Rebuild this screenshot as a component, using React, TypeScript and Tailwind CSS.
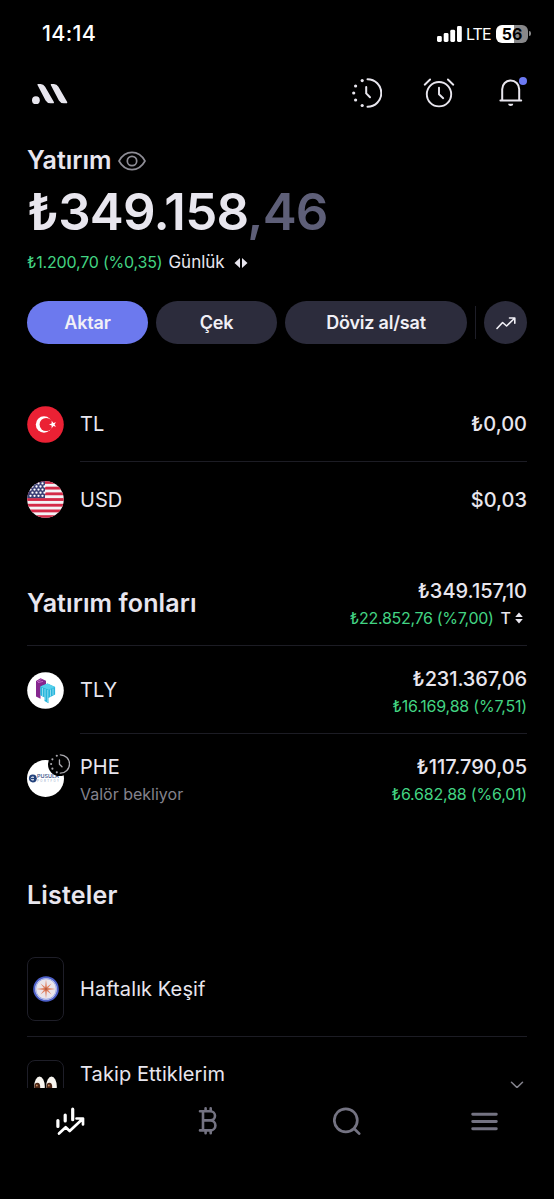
import type { ReactNode } from 'react';

const stars = [0, 1, 2, 3, 4].flatMap((row) => [0, 1, 2, 3].map((col) => [3.5 + col * 4 + (row % 2) * 2, 2.4 + row * 3.1]));

function DottedClock({ className }: { className: string }) {
    return (
        <svg viewBox="0 0 30 30" fill="none" stroke="currentColor" strokeLinecap="round" strokeLinejoin="round" className={className}>
            <path d="M15.5 1.2a13.8 13.8 0 0 1 0 27.6" strokeWidth="2" />
            <path d="M14.2 9v6.4l3.8 3.8" strokeWidth="2" />
            <g fill="currentColor" stroke="none">
                <circle cx="10.2" cy="2.6" r="1.6" />
                <circle cx="3.6" cy="8" r="1.6" />
                <circle cx="1.7" cy="15" r="1.6" />
                <circle cx="3.6" cy="22" r="1.6" />
                <circle cx="10.2" cy="27.5" r="1.6" />
            </g>
        </svg>
    );
}

function StatusBar() {
    return (
        <div className="flex h-[67px] items-center justify-between pl-[42px] pr-[23px] text-white">
            <span className="text-[21.5px] font-medium tracking-[0.3px]">14:14</span>
            <div className="flex items-center">
                <svg viewBox="0 0 25 16" className="h-4 w-[25px]" fill="white">
                    <rect x="0" y="10" width="4.8" height="6" rx="1.4" />
                    <rect x="6.7" y="7" width="4.8" height="9" rx="1.4" />
                    <rect x="13.3" y="3.8" width="4.8" height="12.2" rx="1.4" />
                    <rect x="20" y="0" width="4.8" height="16" rx="1.4" />
                </svg>
                <span className="ml-[4px] w-[26px] text-[16px] leading-[18px] tracking-[-0.9px]">LTE</span>
                <div className="ml-1 flex h-[18px] w-8 items-center justify-center rounded-md bg-linear-to-r from-white from-56% to-[#88888a] to-56% text-[16px] font-bold text-black">
                    56
                </div>
                <div className="ml-[1px] h-[5px] w-[2px] rounded-r-full bg-[#88888a]" />
            </div>
        </div>
    );
}

function Header() {
    return (
        <header className="flex h-[52px] items-center justify-between pl-8 pr-[31px] text-[#e8e6ee]">
            <svg viewBox="0 0 36 22" className="mt-[2px] h-[22px] w-9" fill="currentColor">
                <circle cx="3.9" cy="17.2" r="3.9" />
                <path d="M6.2 1.7h2.300c1.900 0 2.900.7 3.900 2.500l8.800 15.300h-2.600c-2.100 0-3.300-.6-4.300-2.400z" stroke="currentColor" strokeWidth="1.600" strokeLinejoin="round" />
                <path d="M19.500 1.700h2.300c1.900 0 2.900.7 3.900 2.500l8.800 15.300h-2.600c-2.100 0-3.300-.6-4.300-2.400z" stroke="currentColor" strokeWidth="1.600" strokeLinejoin="round" />
            </svg>
            <div className="flex items-center">
                <DottedClock className="size-[30px]" />
                <svg viewBox="0 0 32 30" className="ml-[41px] h-[30px] w-8" fill="none" stroke="currentColor" strokeWidth="1.9" strokeLinecap="round" strokeLinejoin="round">
                    <circle cx="16" cy="16.2" r="12.2" />
                    <path d="M16 9.6v6.6l4.2 4M1.7 6.700l5.400-5.200M30.300 6.700l-5.400-5.200" />
                </svg>
                <div className="relative ml-[44px]">
                    <svg viewBox="0 0 24 30" className="h-[30px] w-6" fill="none" stroke="currentColor" strokeWidth="2" strokeLinecap="round" strokeLinejoin="round">
                        <path d="M3.2 22.400V11.200a8.500 8.800 0 0 1 17 0v11.200M1.400 22.600h20.800" />
                        <path d="M9.200 25.800h5c0 1.400-1 2.200-2.500 2.200s-2.500-.8-2.500-2.200z" fill="currentColor" stroke="none" />
                    </svg>
                    <span className="absolute -top-[1px] left-[20px] size-2 rounded-full bg-[#6c79f3]" />
                </div>
            </div>
        </header>
    );
}

function TurkishFlag() {
    return (
        <svg viewBox="0 0 37 37" className="size-[37px]">
            <circle cx="18.5" cy="18.5" r="18.3" fill="#eb2134" />
            <circle cx="17" cy="18.5" r="8.2" fill="white" />
            <circle cx="19.2" cy="18.5" r="6.6" fill="#eb2134" />
            <path d="M22 18.500l2.600-.9.1-2.800 1.700 2.200 2.600-.8-1.500 2.300 1.500 2.300-2.600-.8-1.700 2.200-.1-2.800z" fill="white" />
        </svg>
    );
}

function UsFlag() {
    return (
        <svg viewBox="0 0 37 37" className="size-[37px]">
            <clipPath id="usd">
                <circle cx="18.5" cy="18.5" r="18.3" />
            </clipPath>
            <g clipPath="url(#usd)">
                <rect width="37" height="37" fill="#f4f3f6" />
                {[0, 1, 2, 3, 4, 5, 6].map((i) => (
                    <rect key={i} y={i * 5.7} width="37" height="2.85" fill="#d42a48" />
                ))}
                <rect width="18" height="17.1" fill="#3b3f75" />
                {stars.map(([x, y]) => (
                    <circle key={`${x}-${y}`} cx={x} cy={y} r="1.15" fill="white" />
                ))}
            </g>
        </svg>
    );
}

function TlyLogo() {
    return (
        <svg viewBox="0 0 37 37" className="size-[37px]">
            <circle cx="18.5" cy="18.5" r="18.3" fill="white" />
            <path d="M9 9l4.500-2.800 5.500 2.600v3.800l-5.500 3v11.200L9 24.500z" fill="#86278f" />
            <path d="M10 9.700l4.500-2.300M11 10.600l5-1.200" stroke="#c76bcb" strokeWidth=".9" />
            <path d="M13.300 14.600l7.200-3 7.600 3.300v7.600l-6.600 3.500v5.200l-4-2.200v-3.500l-4.200-2.200z" fill="#27b5dc" />
            <path d="M13.300 14.600l7.200-3 7.600 3.300-6.500 2.800z" fill="#56d0eb" />
            <path d="M15.500 16v8M18 17v11M20.800 18v12M23.500 17.500v7M26 16.500v6.500" stroke="#b8ebf6" strokeWidth=".7" />
        </svg>
    );
}

function PheLogo() {
    return (
        <div className="relative size-[37px] rounded-full bg-white">
            <svg viewBox="0 0 37 37" className="size-[37px]">
                <circle cx="5.800" cy="18.500" r="3" fill="white" stroke="#23427c" strokeWidth="1.800" />
                <path d="M4 17.700h3v-1.600l2.900 2.400L7 20.900v-1.600H4z" fill="#23427c" />
                <text x="10" y="18.400" fontSize="4.500" fontWeight="600" fill="#45598b" textLength="22" lengthAdjust="spacingAndGlyphs">PUSULA</text>
                <text x="10" y="22" fontSize="2.800" fill="#8da0bf" textLength="22">PORTFÖY</text>
            </svg>
            <span className="absolute -top-[7px] left-[21px] flex size-[23px] items-center justify-center rounded-full bg-black text-[#aaa9af]">
                <DottedClock className="size-5" />
            </span>
        </div>
    );
}

function Compass() {
    return (
        <svg viewBox="0 0 26 26" className="size-[26px]">
            <circle cx="13" cy="13" r="11.8" fill="#eae5eb" stroke="#4d60c9" strokeWidth="2" />
            <circle cx="13" cy="13" r="10.300" fill="none" stroke="#9eace8" strokeWidth="1" />
            <path d="M13 3.500l.9 7.400 4.600-3.400-3.400 4.600 7.400.9-7.400.9 3.400 4.600-4.600-3.400-.9 7.400-.9-7.400-4.600 3.400 3.400-4.600-7.400-.9 7.400-.9-3.400-4.600 4.600 3.400z" fill="#df8262" />
            <circle cx="13" cy="13" r="1.500" fill="#b95c42" />
        </svg>
    );
}

function Eyes() {
    return (
        <svg viewBox="0 0 25 22" className="h-[22px] w-[25px]">
            <ellipse cx="6.500" cy="10.500" rx="5.300" ry="10" fill="#f8f5f0" />
            <ellipse cx="18.500" cy="10.500" rx="5.300" ry="10" fill="#f8f5f0" />
            <ellipse cx="4.300" cy="11" rx="2.900" ry="4.200" fill="#492414" />
            <ellipse cx="16.300" cy="11" rx="2.900" ry="4.200" fill="#492414" />
            <circle cx="3.800" cy="9.500" r=".9" fill="#c98f62" />
            <circle cx="15.800" cy="9.500" r=".9" fill="#c98f62" />
        </svg>
    );
}

function Row({ icon, className, children }: { icon: ReactNode; className: string; children: ReactNode }) {
    return (
        <div className={`flex items-center gap-4 ${className}`}>
            <div className="w-[37px] shrink-0">{icon}</div>
            <div className="flex min-w-0 flex-1 items-center justify-between">{children}</div>
        </div>
    );
}

export default function App() {
    return (
        <div className="h-[1199px] w-[554px] overflow-hidden bg-black font-['Inter',sans-serif] text-[#e8e6ee]">
            <div className="h-[1088px] overflow-hidden">
                <StatusBar />
                <Header />

                <main className="px-[27px]">
                    {/* Balance */}
                    <div className="mt-[26px] flex h-8 items-center">
                        <h1 className="w-[91px] text-[25px] font-semibold">Yatırım</h1>
                        <svg viewBox="0 0 28 20" className="h-5 w-7" fill="none" stroke="#8e8d96" strokeWidth="1.700">
                            <path d="M1 10C4 4.600 8.700 1.400 14 1.400S24 4.600 27 10c-3 5.400-7.700 8.600-13 8.600S4 15.400 1 10z" strokeLinejoin="round" />
                            <circle cx="14" cy="10" r="4.700" />
                        </svg>
                    </div>
                    <div className="mt-[5px] h-[60px] whitespace-nowrap text-[51px] leading-[60px] font-semibold tracking-[-0.8px]">
                        ₺349.158<span className="text-[#5e5f78]">,46</span>
                    </div>
                    <div className="mt-[9px] flex h-6 items-center whitespace-nowrap text-[17px]">
                        <span className="-mt-[2px] text-[16px] tracking-[-0.2px] text-[#43d483]">₺1.200,70 (%0,35)</span>
                        <span className="ml-[6px]">Günlük</span>
                        <svg viewBox="0 0 14 12" className="ml-[9px] h-3 w-[14px]" fill="currentColor">
                            <path d="M6 1v10L.5 6zM8 1v10l5.500-5z" />
                        </svg>
                    </div>

                    {/* Actions */}
                    <div className="mt-[26px] flex h-[43px] text-[18px] font-semibold tracking-[-0.2px] text-[#f1f0f6]">
                        <button className="w-[121px] rounded-full bg-[#6c79ee]">Aktar</button>
                        <button className="ml-2 w-[121px] rounded-full bg-[#2c2c3c]">Çek</button>
                        <button className="ml-2 w-[182px] rounded-full bg-[#2c2c3c]">Döviz al/sat</button>
                        <div className="ml-2 h-[33px] w-px self-center bg-[#1e1e28]" />
                        <button className="ml-2 flex size-[43px] items-center justify-center rounded-full bg-[#2c2c3c]">
                            <svg viewBox="0 0 20 13" className="mt-px h-[13px] w-5" fill="none" stroke="currentColor" strokeWidth="1.600" strokeLinecap="round" strokeLinejoin="round">
                                <path d="M1 11.500l5.600-6 4 3.500 8-7.800M13.500 1h5.300v5.200" />
                            </svg>
                        </button>
                    </div>

                    {/* Cash */}
                    <Row className="mt-[43px] h-[74px]" icon={<TurkishFlag />}>
                        <span className="text-xl">TL</span>
                        <span className="text-xl font-medium">₺0,00</span>
                    </Row>
                    <div className="ml-[53px] h-px bg-[#1c1c24]" />
                    <Row className="h-[75px]" icon={<UsFlag />}>
                        <span className="text-xl">USD</span>
                        <span className="text-xl font-medium">$0,03</span>
                    </Row>

                    {/* Funds */}
                    <div className="mt-[37px] flex h-[72px] items-center justify-between border-b border-[#1c1c24]">
                        <h2 className="-mt-[12px] text-[25px] font-semibold tracking-[0.1px]">Yatırım fonları</h2>
                        <div className="-mt-[11px] text-right">
                            <div className="text-xl leading-7 font-medium">₺349.157,10</div>
                            <div className="-mt-px flex items-center justify-end text-[16px] leading-7">
                                <span className="tracking-[-0.3px] text-[#43d483]">₺22.852,76 (%7,00)</span>
                                <span className="ml-[7px] font-medium">T</span>
                                <svg viewBox="0 0 8 12" className="ml-[4px] mr-[4px] h-3 w-2" fill="currentColor">
                                    <path d="M4 .5l3.800 4.500H.2zM4 11.500L7.800 7H.2z" />
                                </svg>
                            </div>
                        </div>
                    </div>
                    <Row className="h-[88px]" icon={<TlyLogo />}>
                        <span className="text-xl">TLY</span>
                        <div className="mt-[4px] text-right">
                            <div className="text-xl leading-7 font-medium tracking-[-0.15px]">₺231.367,06</div>
                            <div className="-mt-px text-[16px] leading-7 tracking-[-0.2px] text-[#43d483]">₺16.169,88 (%7,51)</div>
                        </div>
                    </Row>
                    <div className="-mt-px ml-[53px] h-px bg-[#1c1c24]" />
                    <Row className="h-[88px]" icon={<PheLogo />}>
                        <div className="mt-[4px]">
                            <div className="text-xl leading-7">PHE</div>
                            <div className="-mt-px text-[16px] leading-7 text-[#84838d]">Valör bekliyor</div>
                        </div>
                        <div className="mt-[4px] text-right">
                            <div className="text-xl leading-7 font-medium">₺117.790,05</div>
                            <div className="-mt-px text-[16px] leading-7 tracking-[-0.2px] text-[#43d483]">₺6.682,88 (%6,01)</div>
                        </div>
                    </Row>

                    {/* Lists */}
                    <h2 className="mt-[57px] h-8 text-[25px] leading-8 font-semibold tracking-[0.2px]">Listeler</h2>
                    <Row
                        className="mt-[46px] h-16"
                        icon={
                            <div className="flex h-16 w-[37px] items-center justify-center rounded-lg border border-[#1e1e28]">
                                <Compass />
                            </div>
                        }
                    >
                        <span className="text-xl tracking-[0.1px]">Haftalık Keşif</span>
                    </Row>
                    <div className="mt-[15px] h-px bg-[#1c1c24]" />
                    <Row
                        className="mt-[23px] h-16"
                        icon={
                            <div className="flex h-16 w-[37px] justify-center rounded-lg border border-[#1e1e28] pt-[15px]">
                                <Eyes />
                            </div>
                        }
                    >
                        <span className="-mt-9 text-xl tracking-[0.1px]">Takip Ettiklerim</span>
                        <svg viewBox="0 0 14 8" className="-mt-[14px] mr-[3px] h-2 w-[14px]" fill="none" stroke="#84838d" strokeWidth="1.500" strokeLinecap="round">
                            <path d="M1.500 1.200L7 6.600l5.500-5.400" />
                        </svg>
                    </Row>
                </main>
            </div>

            <nav className="flex h-[111px] items-start pl-[56px] pt-[19px] text-[#747382]">
                <svg viewBox="0 0 29 29" className="size-[29px]" fill="none" stroke="white" strokeWidth="3.200" strokeLinecap="round" strokeLinejoin="round">
                    <path d="M1.900 13.500v6M9.200 8v6M16.700 2.200v10.500" />
                    <path d="M3 26.500l6.700-6.300 4 3.800L26.500 12M20.500 11.500h6.500v6" strokeWidth="2.700" />
                </svg>
                <svg viewBox="0 0 20 28" className="ml-[113px] h-7 w-5" fill="none" stroke="currentColor" strokeWidth="2.600" strokeLinejoin="round">
                    <path d="M2 4.200h10.400a4.600 4.600 0 0 1 0 9.200H5M12.400 13.400a5 5 0 0 1 0 10H2M5 4.200v19.200M7.600 1.400v2.800M12.700 1.400v2.800M7.600 23.400v2.800M12.700 23.400v2.800" strokeLinecap="round" />
                </svg>
                <svg viewBox="0 0 28 28" className="ml-[115px] size-7" fill="none" stroke="currentColor" strokeWidth="2.700" strokeLinecap="round">
                    <circle cx="12.800" cy="13.300" r="11.500" />
                    <path d="M21.500 22l4.700 4.600" />
                </svg>
                <svg viewBox="0 0 27 28" className="ml-[110px] h-7 w-[27px]" stroke="currentColor" strokeWidth="2.900" strokeLinecap="round">
                    <path d="M1.700 7.300h23.600M1.700 14.500h23.600M1.700 21.700h23.600" />
                </svg>
            </nav>
        </div>
    );
}
